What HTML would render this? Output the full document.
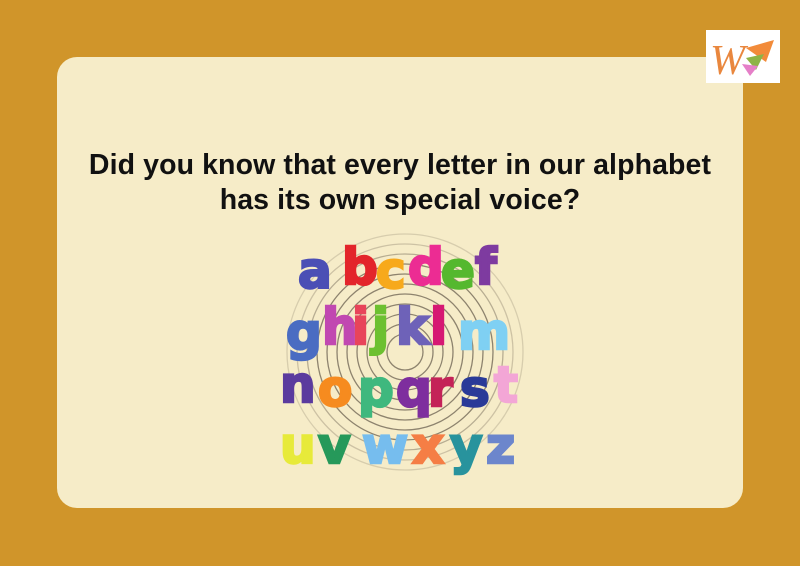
<!DOCTYPE html>
<html><head><meta charset="utf-8"><style>
html,body{margin:0;padding:0;}
body{width:800px;height:566px;background:#D0952A;position:relative;overflow:hidden;font-family:"Liberation Sans",sans-serif;}
.card{position:absolute;left:57px;top:57px;width:686px;height:451px;background:#F6ECC8;border-radius:20px;}
.logo{position:absolute;left:706px;top:30px;width:74px;height:53px;background:#fff;}
.t{position:absolute;left:0;width:800px;text-align:center;font-weight:bold;font-size:28.5px;color:#111;letter-spacing:0.1px;}
.L{position:absolute;font-family:"DejaVu Sans",sans-serif;font-weight:bold;font-size:50px;line-height:1;-webkit-text-stroke:2.5px currentColor;text-shadow:1px 1px 0 rgba(255,255,255,.35);}
</style></head><body>
<div class="card"></div>
<div class="logo">
<svg width="74" height="53" viewBox="0 0 74 53">
<text x="4" y="44" font-family="Liberation Serif" font-style="italic" font-size="42" fill="#E9873E">W</text>
<polygon points="40,18 68,10 60,32" fill="#F28B3A"/>
<polygon points="40,28 58,24 50,40" fill="#8DB446"/>
<polygon points="36,34 52,36 44,46" fill="#E57FC8"/>
</svg>
</div>
<div class="t" style="top:149px">Did you know that every letter in our alphabet</div>
<div class="t" style="top:184px">has its own special voice?</div>
<svg style="position:absolute;left:270px;top:230px" width="270" height="260">
<g fill="none" stroke="#6b6050" stroke-width="1.3" opacity=".75">
<circle cx="135" cy="122" r="18"/><circle cx="135" cy="122" r="28"/><circle cx="135" cy="122" r="38"/><circle cx="135" cy="122" r="48"/><circle cx="135" cy="122" r="58"/><circle cx="135" cy="122" r="68"/><circle cx="135" cy="122" r="78"/><circle cx="135" cy="122" r="88"/><circle cx="135" cy="122" r="98" opacity=".6"/><circle cx="135" cy="122" r="108" opacity=".4"/><circle cx="135" cy="122" r="118" opacity=".3"/>
</g></svg>
<span class="L" style="left:298px;top:246px;color:#4B4FB5">a</span>
<span class="L" style="left:342px;top:242px;color:#E3252B">b</span>
<span class="L" style="left:376px;top:246px;color:#F7A91B">c</span>
<span class="L" style="left:408px;top:242px;color:#EC2C93">d</span>
<span class="L" style="left:441px;top:246px;color:#55B82E">e</span>
<span class="L" style="left:475px;top:242px;color:#7E3BA0">f</span>
<span class="L" style="left:286px;top:307px;color:#4A6CC2">g</span>
<span class="L" style="left:322px;top:302px;color:#C148B1">h</span>
<span class="L" style="left:352px;top:302px;color:#E8445A">i</span>
<span class="L" style="left:372px;top:302px;color:#6DC030">j</span>
<span class="L" style="left:396px;top:302px;color:#6E62B8">k</span>
<span class="L" style="left:430px;top:302px;color:#D61873">l</span>
<span class="L" style="left:458px;top:307px;color:#7FD0F3">m</span>
<span class="L" style="left:280px;top:360px;color:#5B3B9E">n</span>
<span class="L" style="left:318px;top:364px;color:#F68B1F">o</span>
<span class="L" style="left:358px;top:364px;color:#3FB87E">p</span>
<span class="L" style="left:396px;top:364px;color:#7E2E9E">q</span>
<span class="L" style="left:428px;top:364px;color:#C42358">r</span>
<span class="L" style="left:460px;top:364px;color:#2A3A98">s</span>
<span class="L" style="left:494px;top:360px;color:#F3A6D6">t</span>
<span class="L" style="left:280px;top:421px;color:#E7EA3A">u</span>
<span class="L" style="left:318px;top:421px;color:#26995A">v</span>
<span class="L" style="left:362px;top:421px;color:#76BDEE">w</span>
<span class="L" style="left:412px;top:421px;color:#F57E45">x</span>
<span class="L" style="left:450px;top:421px;color:#28939D">y</span>
<span class="L" style="left:486px;top:421px;color:#6C86CC">z</span>
</body></html>
